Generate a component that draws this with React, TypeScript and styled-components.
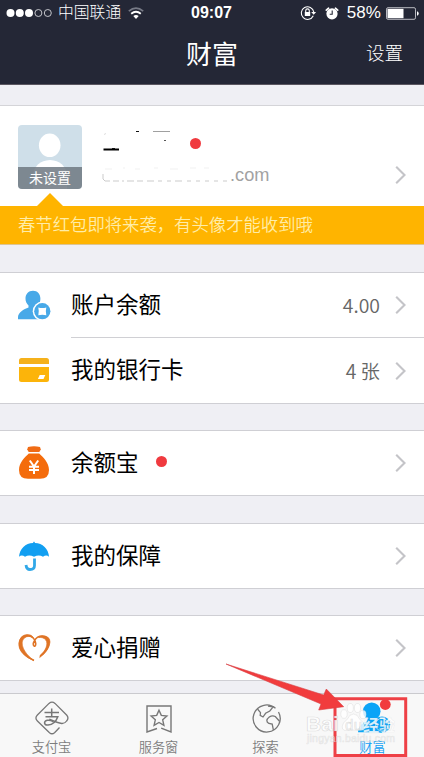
import React from "react";
import styled, { createGlobalStyle } from "styled-components";

const GlobalStyle = createGlobalStyle`
  * { box-sizing: border-box; }
  body { margin: 0; overflow: hidden; }
  svg { display: block; flex: none; overflow: visible; }
`;

const Screen = styled.div`
  position: relative;
  display: flex;
  flex-direction: column;
  width: 424px;
  height: 757px;
  overflow: hidden;
  background: #efeff4;
  color: #000;
  font-family: "Liberation Sans", "Noto Sans CJK SC", sans-serif;
  white-space: nowrap;
`;

const Header = styled.header`
  height: 85px;
  flex: none;
  background: #242736;
  border-bottom: 1px solid #5a5660;
  color: #fff;
`;

const StatusBar = styled.div`
  display: grid;
  grid-template-columns: 1fr auto 1fr;
  align-items: center;
  height: 26px;
  padding: 0 5px 0 4px;
  font-size: 16.5px;
  line-height: 26px;
`;

const StatusSide = styled.div<{ $end?: boolean }>`
  display: flex;
  align-items: center;
  justify-content: ${(p) => (p.$end ? "flex-end" : "flex-start")};
  padding-left: ${(p) => (p.$end ? 0 : 2)}px;
`;

const Carrier = styled.span`
  margin: 0 7px 0 5px;
  font-size: 15.8px;
  font-weight: 300;
`;

const Clock = styled.span`
  font-weight: 700;
  font-size: 16px;
`;

const Percent = styled.span`
  margin: 0 5px 0 8px;
  font-size: 17px;
  letter-spacing: 0.1px;
`;

const NavBar = styled.div`
  display: grid;
  grid-template-columns: 1fr auto 1fr;
  align-items: center;
  height: 58px;
  padding: 0 21px;
`;

const Title = styled.h1`
  grid-column: 2;
  margin: 0;
  font-size: 26px;
  font-weight: 400;
  line-height: 56px;
`;

const NavAction = styled.span`
  justify-self: end;
  font-size: 18.5px;
  font-weight: 300;
  line-height: 54px;
  padding-bottom: 2px;
`;

const Profile = styled.section`
  display: flex;
  height: 101px;
  flex: none;
  margin-top: 20px;
  padding: 19px 17px 0 18px;
  background: #fff;
  border-top: 1px solid #d4d4d8;
`;

const Avatar = styled.div`
  display: flex;
  flex-direction: column;
  width: 64px;
  height: 64px;
  overflow: hidden;
  border-radius: 4px;
  background: #cfdfe9;
`;

const AvatarLabel = styled.div`
  position: relative;
  height: 22px;
  margin-top: -22px;
  flex: none;
  background: rgba(112, 121, 130, 0.86);
  color: #fff;
  font-size: 14px;
  line-height: 22px;
  text-align: center;
`;

const Identity = styled.div`
  display: flex;
  flex-direction: column;
  flex: 1;
  padding: 3px 0 0 20px;
`;

const NameLine = styled.div`
  display: flex;
  height: 34px;
`;

const MailLine = styled.div`
  display: flex;
  align-items: center;
  height: 26px;
  color: #a2a2a2;
  font-size: 18.2px;
`;

const Dot = styled.i<{ $left: number; $top: number }>`
  width: 11px;
  height: 11px;
  margin: ${(p) => p.$top}px 0 0 ${(p) => p.$left}px;
  border-radius: 50%;
  background: #f03a3f;
`;

const ProfileArrow = styled.div`
  padding-top: 40px;
`;

const Banner = styled.div`
  position: relative;
  height: 39px;
  flex: none;
  padding-left: 18px;
  background: #ffb400;
  color: #ffeda8;
  font-size: 17.35px;
  line-height: 38px;
  font-weight: 350;
  border-bottom: 1px solid #dcc493;
  &::before {
    content: "";
    position: absolute;
    left: 37px;
    top: -13px;
    border: solid transparent;
    border-width: 0 13px 13px;
    border-bottom-color: #ffb400;
  }
`;

const Group = styled.section<{ $gap: number }>`
  flex: none;
  margin-top: ${(p) => p.$gap}px;
  background: #fff;
  border-top: 1px solid #cfcfd4;
  border-bottom: 1px solid #cfcfd4;
`;

const Row = styled.div<{ $divided?: boolean }>`
  display: flex;
  height: ${(p) => (p.$divided ? 66 : 64)}px;
  padding-left: 18px;
`;

const RowIcon = styled.div`
  display: flex;
  align-items: center;
  width: 53px;
`;

const RowBody = styled.div<{ $divided?: boolean }>`
  display: flex;
  align-items: center;
  flex: 1;
  padding-right: 17px;
  border-top: ${(p) => (p.$divided ? "1px solid #d0d0d4" : "0")};
`;

const RowLabel = styled.span`
  font-size: 22.5px;
  line-height: 32px;
  padding-top: 1px;
`;

const RowValue = styled.span`
  margin-left: auto;
  padding-right: 14px;
  color: #666;
  font-family: "Noto Sans CJK SC", sans-serif;
  font-size: 19.4px;
  line-height: 28px;
  font-weight: 350;
`;

const Push = styled.span`
  margin-left: auto;
`;

const StatusGap = styled.span`
  width: 8px;
`;

const TabBar = styled.nav`
  display: grid;
  grid-template-columns: repeat(4, 107px);
  flex: 1;
  margin-top: 12px;
  margin-left: -2px;
  background: #f8f8f8;
  border-top: 1px solid #cacace;
`;

const Tab = styled.div<{ $active?: boolean }>`
  display: flex;
  flex-direction: column;
  align-items: center;
  padding-top: 7px;
  color: ${(p) => (p.$active ? "#12a1f4" : "#7d7d7d")};
  font-size: 13.2px;
  line-height: 18px;
  font-weight: 350;
  svg { margin-bottom: 4px; }
`;

const Overlay = styled.div`
  position: absolute;
  left: 220px;
  top: 655px;
`;

const Chevron = () => (
  <svg width="13" height="20" viewBox="0 0 13 20" fill="none" stroke="#c4c4c8" strokeWidth="2.1">
    <path d="M2.2 1.8 10.5 10 2.2 18.2" />
  </svg>
);

const Signal = () => (
  <svg width="47" height="10" viewBox="0 0 47 10" fill="#fff">
    <circle cx="4.5" cy="5" r="4" />
    <circle cx="13.8" cy="5" r="4" />
    <circle cx="23" cy="5" r="4" />
    <g fill="none" stroke="#d5d6da" strokeWidth="0.9">
      <circle cx="32.4" cy="5" r="3.5" />
      <circle cx="41.8" cy="5" r="3.5" />
    </g>
  </svg>
);

const Wifi = () => (
  <svg width="16" height="12" viewBox="0 0 16 12" fill="none">
    <path d="M.8 4.2Q8-2 15.2 4.2" stroke="#777a86" strokeWidth="1.7" />
    <path d="M3.2 6.7q4.8-4 9.6 0" stroke="#fff" strokeWidth="1.8" />
    <path d="M5.3 9q2.7-2 5.4 0L8 11.9Z" fill="#fff" />
  </svg>
);

const RotationLock = () => (
  <svg width="17" height="16" viewBox="0 0 17 16" fill="none" stroke="#fff">
    <path d="M13.3 10.8A6.3 6.3 0 1 1 13.8 7" strokeWidth="1.1" />
    <path d="m11.2 7.1 4.9-.1-2.4 2.8Z" fill="#fff" stroke="none" />
    <path d="M5.7 7V5.700a1.800 1.800 0 0 1 3.600 0V7" strokeWidth="1.1" />
    <rect x="4.8" y="7" width="5.4" height="4" fill="#fff" stroke="none" />
  </svg>
);

const Alarm = () => (
  <svg width="14" height="15" viewBox="0 0 14 15" fill="none">
    <path d="M1.300 4.200 3.600 2.200M12.700 4.200l-2.300-2" stroke="#fff" strokeWidth="1.7" strokeLinecap="round" />
    <circle cx="7" cy="7.800" r="5.600" fill="#fff" />
    <path d="M7.200 4.500v3.700H4.700" stroke="#242736" strokeWidth="1.1" />
  </svg>
);

const Battery = () => (
  <svg width="33" height="13" viewBox="0 0 33 13">
    <rect x=".5" y=".7" width="29" height="11.6" rx="1.5" fill="none" stroke="#b9bac1" />
    <rect x="1.5" y="1.8" width="16" height="9.4" fill="#fff" />
    <path d="M31 4.2q1.7.4 1.7 2.3T31 8.8Z" fill="#fff" />
  </svg>
);

const AvatarFigure = () => (
  <svg width="64" height="64" viewBox="0 0 64 64" fill="#fff">
    <ellipse cx="31.7" cy="20.3" rx="10.8" ry="11.8" />
    <path d="M15 50q2-14 17-15 15 1 17 15v14H15Z" />
  </svg>
);

const MaskedName = () => (
  <svg width="70" height="30" viewBox="0 0 70 30">
    <path d="M1.500 21.500h15.500" stroke="#000" strokeWidth="2" />
    <path d="M10 20.500h3M34 3.500h3" stroke="#111" strokeWidth="1.200" />
    <path d="M51 3.500h17" stroke="#888" strokeWidth=".8" />
    <path d="M62 12.500h2" stroke="#555" />
    <path d="M2 6.500l2-1" stroke="#ddd" />
  </svg>
);

const MaskedMail = () => (
  <svg width="128" height="24" viewBox="0 0 128 24" fill="none">
    <path d="M1 11v5l2 2h5m3 0h6m3 0h2m3 0h7m3 0h6m4 0h7m4 0h4m5 0h4m4 0h7m5 0h4m5 0h4m5 0h4m5 0h4m5 0h4" stroke="#b5b5b5" strokeWidth=".7" />
    <path d="M3 6h7M21 5h2m10 1h5m14-1h4m12 1h8m12-1h6m8 0h5" stroke="#eee" strokeWidth=".8" />
  </svg>
);

const PersonCoin = () => (
  <svg width="33" height="30" viewBox="0 0 33 30">
    <path d="M15 .8c4.600 0 7.400 3.400 7.400 8 0 3.100-1.300 5.500-3.200 7.200v4l7 9.200H0v-2.100c0-4.600 5.800-7.900 10.500-9.600v-2C8.700 13.800 7.500 11.700 7.500 8.800 7.500 4.200 10.400.8 15 .8Z" fill="#48a9e8" />
    <circle cx="24.3" cy="21.2" r="9.6" fill="#fff" />
    <circle cx="24.3" cy="21.2" r="8.1" fill="#48a9e8" />
    <path d="M20.3 17.500q4 1 8 0-1 3.700 0 7.700-4-1-8 0 1-4 0-7.700Z" fill="#fff" />
  </svg>
);

const Card = () => (
  <svg width="32" height="26" viewBox="0 0 32 26">
    <path d="M1 7V3.500Q1 1 3.500 1h25Q31 1 31 3.500V7Z" fill="#f5b11b" />
    <path d="M1 10h30v12.500q0 2.500-2.500 2.500h-25Q1 25 1 22.500Z" fill="#fcb40a" />
    <path d="m21.700 18h5.600L25.500 22h-5.600Z" fill="#fff" />
  </svg>
);

const MoneyBag = () => (
  <svg width="32" height="34" viewBox="0 0 32 34">
    <path d="M10 1q6-1.500 12 0l.8 2.400L21.300 6H10.700L9.200 3.400Z" fill="#f06b14" />
    <path d="M10.800 7.500h10.400C25 11 31 16.500 31 24q0 8.800-9 8.800H10Q1 32.800 1 24C1 16.500 7 11 10.800 7.500Z" fill="#f46c0c" />
    <path d="m11.800 14.500 4.200 6 4.200-6M11 20.700h10M11 24h10M16 20v8" stroke="#fff" strokeWidth="2" fill="none" />
  </svg>
);

const Umbrella = () => (
  <svg width="32" height="31" viewBox="0 0 32 31">
    <path d="M15 2q1-3 2 0c7.500 0 13.500 6 14 13.800q-2.700-2.600-6 0-4-2.500-9 0-5-2.500-9 0-3.300-2.600-6 0C1.500 8 7.500 2 15 2Z" fill="#129ff1" />
    <path d="M16.500 17.500v7q0 4-4.500 4-3.500 0-4-4.500" fill="none" stroke="#31a8e8" strokeWidth="2.800" />
  </svg>
);

const Heart = () => (
  <svg width="33" height="28" viewBox="0 0 33 28" fill="none">
    <path d="M16 26.500C8 23 1.500 16.500 1.500 9.500 1.500 2.500 10-.5 15.200 4c3.300 3 3 8.600 1.200 8.300-3-.8 0-10.500 8.200-10.300 4.600.1 7 3.700 6 8.500-1 5-3.800 8.500-8.400 11.700" stroke="#df7426" strokeWidth="1.600" />
    <path d="M1 9Q2 1 9 .6q4.500-.2 6.500 3.100Q10.500.8 6.400 4C1 9 6 19.500 16 26.500 6 23 0 16 1 9ZM23 2q9-.7 9 6-.5 8-10.300 15.500l.7-2.400C28 16.500 30.500 9.500 27.800 6 26 3.500 22.500 3.200 20.500 3.500Z" fill="#df7426" stroke="#df7426" strokeWidth=".7" />
  </svg>
);

const PayIcon = () => (
  <svg width="34" height="34" viewBox="0 0 34 34" fill="none" stroke="#777" strokeWidth="1.3">
    <path d="M24.500 26.500q-2.700 3-5 5.200-2.500 2.200-5 0L2.400 20q-3-3 0-6L14 2.400q3-2.600 6 0L31.600 14q2.700 3 0 6-1.700 2.600-4.800 2.500c-4-.4-8.500-2.500-12.500-4.300" />
    <path d="M9.500 11.500h14.500M16.700 7.500v8.300M10.500 15.800h12.300c-2 5.500-6 8-9.800 8.300-4.200.3-4.700-3.700-.7-4.800q2.500-.6 6 1.300" strokeWidth="1.5" />
  </svg>
);

const ServiceIcon = () => (
  <svg width="34" height="34" viewBox="0 0 34 34" fill="none" stroke="#777" strokeWidth="1.4">
    <path d="M15 27.500 5 31V5h24v26l-9.800-3.800" />
    <path d="m17 9.300 2.300 5.100 5.600.6-4.200 3.800 1.200 5.500-4.900-2.800-4.900 2.800 1.200-5.500L9.100 15l5.600-.6Z" />
  </svg>
);

const GlobeIcon = () => (
  <svg width="34" height="34" viewBox="0 0 34 34" fill="none" stroke="#777" strokeWidth="1.3">
    <path d="M29.500 11A13.500 13.500 0 1 1 26.500 7.300" />
    <path d="m8.500 8 3 3.600-.3 2.700 2.800 1.700 2.600-3.700 4.200-2.300 3.400-4.200-5.200-.7" />
    <path d="M30.500 20.300 26.300 15.500q-3-1.500-6 .5-4.700 3.700-.4 6.500l3.300.6 1.200 6.100" />
  </svg>
);

const WealthIcon = () => (
  <svg width="34" height="34" viewBox="0 0 34 34" fill="#0ba4f7">
    <circle cx="15.7" cy="10.2" r="8.800" />
    <path d="M2 31.300q.5-8 8.700-11L11 15.500h10l1 5 4 10.800Z" />
    <circle cx="26" cy="23.700" r="8.300" />
    <circle cx="26" cy="23.700" r="6.400" fill="none" stroke="#a3dbf7" />
    <circle cx="29.300" cy="3.500" r="5.400" fill="#f13b3e" />
  </svg>
);

const Annotation = () => (
  <svg width="204" height="102" viewBox="0 0 204 102">
    <path d="M115 43.800h70.700v56.700H115Z" fill="none" stroke="#ee4046" strokeWidth="3" />
    <path d="M6 9 103.700 40l2.600-6 17.400 17.700L98.700 55l2.300-6Z" fill="#f13c3d" stroke="#d84044" strokeWidth=".6" />
    <g fill="#fff" fillOpacity=".8" stroke="#b8b8b8" strokeOpacity=".28" strokeWidth=".8">
      <ellipse cx="124" cy="59" rx="3.200" ry="4.300" />
      <ellipse cx="130.300" cy="53" rx="3.100" ry="4.500" />
      <ellipse cx="137.500" cy="53" rx="3.100" ry="4.500" />
      <ellipse cx="143" cy="59.500" rx="3.200" ry="4.200" />
      <path d="M133.500 59q4 0 6 5l4 4q4 8-4 7.500-6-1-12 0-8 .5-4-7.500l4-4q2-5 6-5Z" />
    </g>
    <g fontFamily="Liberation Sans, sans-serif" fill="#fff" fillOpacity=".85" stroke="#aaa" strokeOpacity=".38" strokeWidth=".7">
      <text x="86" y="76" fontSize="19.500" fontWeight="700" textLength="33" lengthAdjust="spacingAndGlyphs">Bai</text>
      <text x="125" y="75" fontSize="15" textLength="17">du</text>
      <text x="143" y="76" fontSize="16" fontWeight="700" fontFamily="Noto Sans CJK SC, sans-serif" textLength="32" strokeOpacity=".15">经验</text>
      <text x="87" y="87" fontSize="10.500" textLength="88" strokeOpacity=".26" fillOpacity=".62">jingyan.baidu.com</text>
    </g>
  </svg>
);

type ItemProps = {
  icon: React.ReactNode;
  label: string;
  value?: string;
  dot?: boolean;
  divided?: boolean;
};

const Item = ({ icon, label, value, dot, divided }: ItemProps) => (
  <Row $divided={divided}>
    <RowIcon>{icon}</RowIcon>
    <RowBody $divided={divided}>
      <RowLabel>{label}</RowLabel>
      {dot && <Dot $left={17} $top={-3} />}
      {value ? <RowValue>{value}</RowValue> : <Push />}
      <Chevron />
    </RowBody>
  </Row>
);

export default function App() {
  return (
    <>
      <GlobalStyle />
      <Screen>
        <Header>
          <StatusBar>
            <StatusSide>
              <Signal />
              <Carrier>中国联通</Carrier>
              <Wifi />
            </StatusSide>
            <Clock>09:07</Clock>
            <StatusSide $end>
              <RotationLock />
              <StatusGap />
              <Alarm />
              <Percent>58%</Percent>
              <Battery />
            </StatusSide>
          </StatusBar>
          <NavBar>
            <Title>财富</Title>
            <NavAction>设置</NavAction>
          </NavBar>
        </Header>

        <Profile>
          <Avatar>
            <AvatarFigure />
            <AvatarLabel>未设置</AvatarLabel>
          </Avatar>
          <Identity>
            <NameLine>
              <MaskedName />
              <Dot $left={18} $top={10} />
            </NameLine>
            <MailLine>
              <MaskedMail />
              .com
            </MailLine>
          </Identity>
          <ProfileArrow>
            <Chevron />
          </ProfileArrow>
        </Profile>
        <Banner>春节红包即将来袭，有头像才能收到哦</Banner>

        <Group $gap={27}>
          <Item icon={<PersonCoin />} label="账户余额" value="4.00" />
          <Item icon={<Card />} label="我的银行卡" value="4 张" divided />
        </Group>
        <Group $gap={26}>
          <Item icon={<MoneyBag />} label="余额宝" dot />
        </Group>
        <Group $gap={27}>
          <Item icon={<Umbrella />} label="我的保障" />
        </Group>
        <Group $gap={26}>
          <Item icon={<Heart />} label="爱心捐赠" />
        </Group>

        <TabBar>
          <Tab><PayIcon />支付宝</Tab>
          <Tab><ServiceIcon />服务窗</Tab>
          <Tab><GlobeIcon />探索</Tab>
          <Tab $active><WealthIcon />财富</Tab>
        </TabBar>
        <Overlay>
          <Annotation />
        </Overlay>
      </Screen>
    </>
  );
}
